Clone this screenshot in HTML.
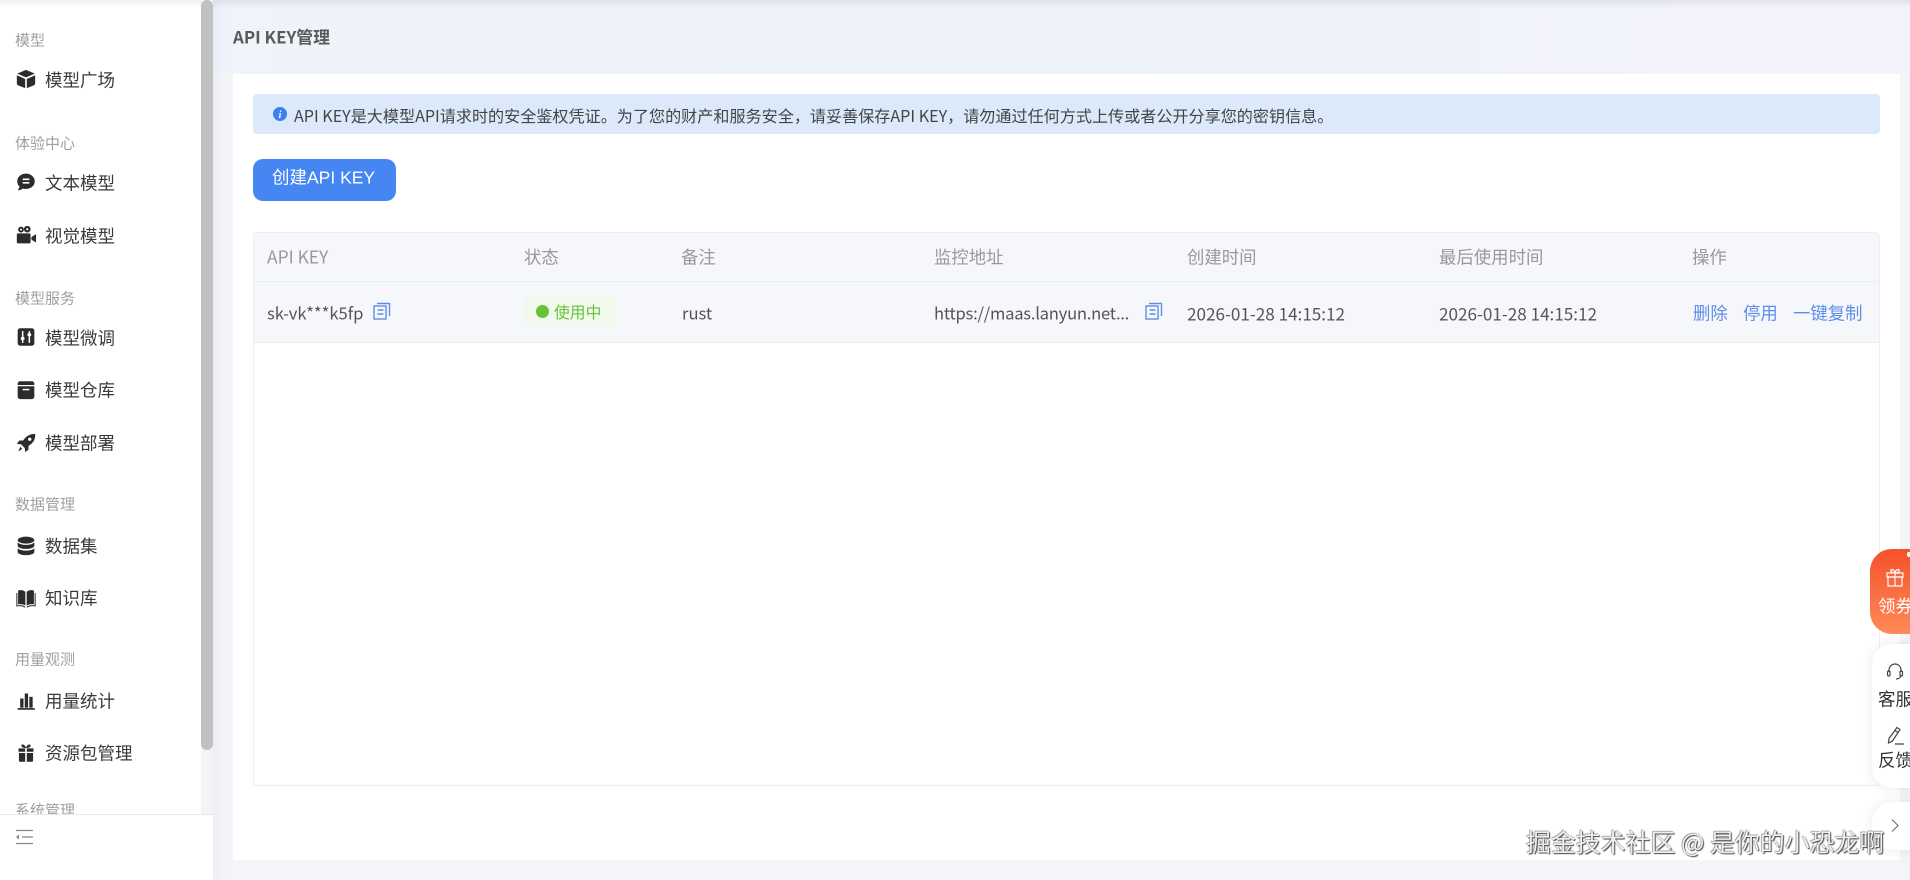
<!DOCTYPE html>
<html lang="zh"><head><meta charset="utf-8"><title>API KEY管理</title>
<style>
*{box-sizing:border-box}
html,body{margin:0;padding:0}
body{width:1910px;height:880px;overflow:hidden;position:relative;background:#f4f5f9;font-family:"Noto Sans CJK SC","Liberation Sans",sans-serif;color:#333}
.a{position:absolute}
.t{position:absolute;white-space:nowrap;line-height:1;transform:translateY(-50%)}
.sec{left:15px;font-size:15px;color:#9f9f9f}
.nav{left:45px;font-size:17.5px;color:#3a3a3a}
.ic{position:absolute;left:16px;width:20px;height:20px;fill:#2c2c2c}
.th{font-size:17.4px;color:#999;top:257px}
.td{font-size:16.6px;color:#555;top:313px}
.dt{font-size:17.1px}
.lnk{font-size:17.4px;color:#5f8ee8;top:313px}
.cp{position:absolute;width:18px;height:18px;fill:none;stroke:#5f8ee0;stroke-width:1.4}
</style></head><body>
<div class="a" style="left:0;top:0;width:1910px;height:74px;background:linear-gradient(90deg,#f0f3fa 0%,#eef2fb 55%,#f3f3fc 100%)"></div>
<div class="a" style="left:0;top:0;width:1910px;height:8px;background:linear-gradient(180deg,rgba(120,120,130,.14),rgba(120,120,130,0))"></div>
<div class="t" style="left:233px;top:37px;font-size:16.900px;font-weight:700;color:#5a5a5a">API KEY管理</div>

<div class="a" style="left:233px;top:74px;width:1667px;height:786px;background:#fff"></div>
<div class="a" style="left:253px;top:94px;width:1627px;height:40px;background:#dbe9fb;border-radius:4px"></div>
<svg class="a" style="left:273px;top:107px;width:14px;height:14px" viewBox="0 0 14 14"><circle cx="7" cy="7" r="7" fill="#3b82f0"/><text x="7" y="11" text-anchor="middle" font-size="10" font-weight="700" font-style="italic" font-family="Liberation Serif,serif" fill="#fff">i</text></svg>
<div class="t" style="left:294px;top:115px;font-size:16.1px;color:#444">API KEY是大模型API请求时的安全鉴权凭证。为了您的财产和服务安全，请妥善保存API KEY，请勿通过任何方式上传或者公开分享您的密钥信息。</div>
<div class="a" style="left:253px;top:159px;width:143px;height:42px;background:#4686f2;border-radius:10px"></div>
<div class="t" style="left:272px;top:178px;font-size:17.5px;color:#fff;font-family:'Liberation Sans','Noto Sans CJK SC',sans-serif">创建API KEY</div>

<div class="a" style="left:253px;top:232px;width:1627px;height:554px;border:1px solid #ebeef5;border-radius:4px;background:#fff"></div>
<div class="a" style="left:254px;top:233px;width:1625px;height:49px;background:#f5f7fa;border-bottom:1px solid #ebeef4;border-radius:4px 4px 0 0"></div>
<div class="a" style="left:254px;top:282px;width:1625px;height:61px;background:#f5f7fb;border-bottom:1px solid #ebeef4"></div>
<div class="t th" style="left:267px">API KEY</div>
<div class="t th" style="left:524px">状态</div>
<div class="t th" style="left:681px">备注</div>
<div class="t th" style="left:934px">监控地址</div>
<div class="t th" style="left:1187px">创建时间</div>
<div class="t th" style="left:1439px">最后使用时间</div>
<div class="t th" style="left:1692px">操作</div>

<div class="t td" style="left:267px">sk-vk***k5fp</div>
<svg class="cp" style="left:373px;top:302px" viewBox="0 0 18 18"><rect x="1" y="4" width="12" height="13"/><path d="M4 1.500h12.500v12.500M4.500 8h6M4.500 12h6"/></svg>
<div class="a" style="left:525px;top:296px;width:91px;height:30px;background:#f0f9eb;border-radius:4px"></div>
<div class="a" style="left:536px;top:305px;width:13px;height:13px;background:#67c23a;border-radius:50%"></div>
<div class="t" style="left:554px;top:312px;font-size:15.800px;color:#67c23a">使用中</div>
<div class="t td" style="left:682px">rust</div>
<div class="t td" style="left:934px;letter-spacing:-.24px">https://maas.lanyun.net...</div>
<svg class="cp" style="left:1145px;top:302px" viewBox="0 0 18 18"><rect x="1" y="4" width="12" height="13"/><path d="M4 1.500h12.500v12.500M4.500 8h6M4.500 12h6"/></svg>
<div class="t td dt" style="left:1187px">2026-01-28 14:15:12</div>
<div class="t td dt" style="left:1439px">2026-01-28 14:15:12</div>
<div class="t lnk" style="left:1693px">删除</div>
<div class="t lnk" style="left:1743px">停用</div>
<div class="t lnk" style="left:1793px">一键复制</div>

<!-- sidebar -->
<div class="a" style="left:0;top:0;width:213px;height:880px;background:#fff;box-shadow:4px 0 10px rgba(120,130,160,.07)"></div>
<div class="a" style="left:0;top:0;width:201px;height:8px;background:linear-gradient(180deg,#f1f1f3,#fff)"></div>
<div class="a" style="left:201px;top:0;width:12px;height:814px;background:#f3f4f6"></div>
<div class="a" style="left:201px;top:0;width:12px;height:750px;background:#c1c1c1;border-radius:6px"></div>

<div class="t sec" style="top:40px">模型</div>
<svg class="ic" style="top:69px" viewBox="0 0 24 24"><path d="M12 1 22.500 5.500 12 10 1.500 5.500z"/><path d="M1 7.500 11 12v11L3 19.800A3 3 0 0 1 1 17z"/><path d="M23 7.500 13 12v11l8-3.200A3 3 0 0 0 23 17z"/></svg>
<div class="t nav" style="top:80px">模型广场</div>
<div class="t sec" style="top:143px">体验中心</div>
<svg class="ic" style="top:172px" viewBox="0 0 24 24"><path d="M12 2C5.800 2 1.500 6 1.500 11.200c0 2.600 1 4.700 2.800 6.300-.3 1.700-1.300 3.300-2.500 4.300 2.500.2 4.800-.6 6.500-2 1.200.4 2.400.5 3.700.5 6.200 0 10.500-4 10.500-9S18.200 2 12 2z"/><path d="M8 8.800h8M8 13h8" stroke="#fff" stroke-width="2"/></svg>
<div class="t nav" style="top:183px">文本模型</div>
<svg class="ic" style="top:225px" viewBox="0 0 24 24"><circle cx="6" cy="5.500" r="3.500"/><circle cx="13.500" cy="5" r="4"/><circle cx="6" cy="5.500" r="1.200" fill="#fff"/><circle cx="13.500" cy="5" r="1.300" fill="#fff"/><rect x="1" y="10" width="16.500" height="12" rx="1.500"/><path d="M18.500 14.500 24 11v10l-5.500-3.500z"/></svg>
<div class="t nav" style="top:236px">视觉模型</div>
<div class="t sec" style="top:298px">模型服务</div>
<svg class="ic" style="top:327px" viewBox="0 0 24 24"><rect x="2" y="1.500" width="20" height="21" rx="3"/><path d="M8 5v14M16 5v14" stroke="#fff" stroke-width="1.800"/><rect x="5.800" y="12" width="4.400" height="3.500" rx="1" fill="#fff"/><rect x="13.800" y="7.500" width="4.400" height="3.500" rx="1" fill="#fff"/></svg>
<div class="t nav" style="top:338px">模型微调</div>
<svg class="ic" style="top:380px" viewBox="0 0 24 24"><path d="M5 1.500h14a3 3 0 0 1 3 3V6H2V4.500a3 3 0 0 1 3-3z"/><path d="M2 7.500h20V20a3 3 0 0 1-3 3H5a3 3 0 0 1-3-3z"/><path d="M8 11.500h8" stroke="#fff" stroke-width="1.800"/></svg>
<div class="t nav" style="top:390px">模型仓库</div>
<svg class="ic" style="top:433px" viewBox="0 0 24 24"><path d="M23 1c-6 0-11 2.500-14.500 8H4L1 13l5 .5 4.500 4.500.5 5 4-3v-4.500C21 12 23.500 7 23 1z"/><circle cx="16.500" cy="7.500" r="2" fill="#fff"/><path d="M5 16.500l2.500 2.500L3 22z"/></svg>
<div class="t nav" style="top:443px">模型部署</div>
<div class="t sec" style="top:504px">数据管理</div>
<svg class="ic" style="top:536px" viewBox="0 0 24 24"><ellipse cx="12" cy="5" rx="10" ry="4.200"/><path d="M2 7.500v4c0 2.300 4.500 4 10 4s10-1.700 10-4v-4c-1.500 2-5.500 3.200-10 3.200S3.500 9.500 2 7.500z"/><path d="M2 14.500V19c0 2.300 4.500 4 10 4s10-1.700 10-4v-4.500c-1.500 2-5.500 3-10 3s-8.500-1-10-3z"/></svg>
<div class="t nav" style="top:546px">数据集</div>
<svg class="ic" style="top:588px" viewBox="0 0 24 24"><path d="M2.500 3C6 2 9 2.500 11.200 4.500V21c-2.500-1.500-5.500-2-8.700-1.500z"/><path d="M21.500 3c-3.500-1-6.500-.5-8.700 1.500V21c2.500-1.500 5.500-2 8.700-1.500z"/><path d="M1 6v15.500c3.500-.7 7-.5 10 1.500M23 6v15.500c-3.500-.7-7-.5-10 1.500" fill="none" stroke="#2c2c2c" stroke-width="1.200"/></svg>
<div class="t nav" style="top:598px">知识库</div>
<div class="t sec" style="top:659px">用量观测</div>
<svg class="ic" style="top:691px" viewBox="0 0 24 24"><rect x="5" y="9" width="4" height="11"/><rect x="10.500" y="3" width="4" height="17"/><rect x="16" y="7" width="4" height="13"/><rect x="2" y="20.500" width="20.500" height="2"/></svg>
<div class="t nav" style="top:701px">用量统计</div>
<svg class="ic" style="top:743px" viewBox="0 0 24 24"><path d="M3 6.500h8v4H3zM13 6.500h8v4h-8zM3.500 12h7.500v10.500H5a1.500 1.500 0 0 1-1.500-1.500zM13 12h7.500v9a1.500 1.500 0 0 1-1.500 1.500h-6z"/><path d="M12 6C9 6 6 5 6.500 2.800 7 1 10.500 1.500 12 5.500 13.500 1.500 17 1 17.500 2.800 18 5 15 6 12 6z"/></svg>
<div class="t nav" style="top:753px">资源包管理</div>
<div class="a" style="left:0;top:795px;width:201px;height:19px;overflow:hidden"><div class="t sec" style="top:15px">系统管理</div></div>
<div class="a" style="left:0;top:814px;width:213px;height:66px;background:#fff;border-top:1px solid #e6e8ec"></div>
<svg class="a" style="left:15px;top:829px;width:18px;height:16px" viewBox="0 0 18 16" stroke="#888" stroke-width="1.300" fill="none"><path d="M1 1.500h17M7 8h11M1 14.500h17"/><path d="M4 5.500 1 8l3 2.500z" fill="#888" stroke="none"/></svg>

<!-- right float -->
<div class="a" style="left:1872px;top:644px;width:60px;height:144px;background:#fff;border-radius:20px;box-shadow:0 0 12px rgba(0,0,0,.09)"></div>
<div class="a" style="left:1872px;top:802px;width:60px;height:48px;background:#fff;border-radius:20px;box-shadow:0 0 12px rgba(0,0,0,.09)"></div>
<div class="a" style="left:1870px;top:549px;width:60px;height:85px;background:linear-gradient(180deg,#f4512c,#ff8a58);border-radius:22px"></div>
<div class="a" style="left:1907px;top:552px;width:4px;height:5px;background:#fff;border-radius:2px"></div>
<svg class="a" style="left:1886px;top:568px;width:18px;height:19px" viewBox="0 0 18 19" fill="none" stroke="#fff" stroke-width="1.200"><rect x="1" y="5" width="16" height="4"/><rect x="2" y="9" width="14" height="9"/><path d="M9 5v13M9 5C6 5 4 3.500 5 2c1-1.200 3.500 0 4 3 .5-3 3-4.200 4-3 1 1.500-1 3-4 3z"/></svg>
<div class="t" style="left:1878px;top:606px;font-size:17.5px;color:#fff">领券</div>
<svg class="a" style="left:1886px;top:662px;width:18px;height:19px" viewBox="0 0 18 19" fill="none" stroke="#444" stroke-width="1.200"><path d="M3 10V8a6 6 0 0 1 12 0v2M15 13c0 2.500-2 4-5 4"/><rect x="1.500" y="9" width="2.500" height="5" rx="1.200"/><rect x="14" y="9" width="2.500" height="5" rx="1.200"/></svg>
<div class="t" style="left:1878px;top:699px;font-size:17.5px;color:#333">客服</div>
<svg class="a" style="left:1886px;top:726px;width:20px;height:19px" viewBox="0 0 20 19" fill="none" stroke="#444" stroke-width="1.200"><path d="M11 1.500 14 3.500 6.500 15 2.500 17 3 12.500zM9 4.500l3 2M9 18h9"/></svg>
<div class="t" style="left:1878px;top:760px;font-size:17.5px;color:#333">反馈</div>
<svg class="a" style="left:1890px;top:818px;width:10px;height:15px" viewBox="0 0 10 15" fill="none" stroke="#666" stroke-width="1"><path d="M2 1.500 8 7.500 2 13.500"/></svg>

<div class="t" style="left:1526px;top:842px;font-size:24.900px;color:#f0f0f0;text-shadow:1px 1px 1px #444,-.5px -.5px 1px #666">掘金技术社区 @ 是你的小恐龙啊</div>
</body></html>
